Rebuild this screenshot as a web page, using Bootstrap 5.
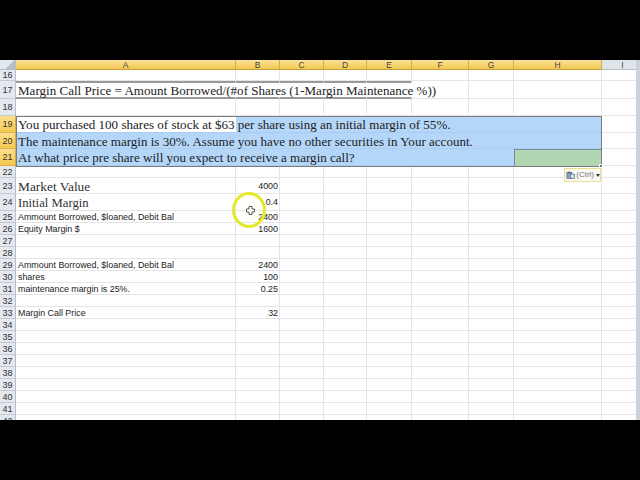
<!DOCTYPE html>
<html><head><meta charset="utf-8">
<link href="https://cdn.jsdelivr.net/npm/bootstrap@5.3.0/dist/css/bootstrap.min.css" rel="stylesheet">
<style>
html,body{margin:0;background:#000;overflow:hidden}
.xl-stage{width:640px;height:480px;padding:60px 0;background:#000}
.xl-sheet{position:relative;width:640px;height:360px;overflow:hidden;background:#fff}
.xl-grid{table-layout:fixed;border-collapse:separate;border-spacing:0;width:640px;font:8.9px/1 "Liberation Sans",sans-serif;color:#222}
.xl-grid td,.xl-grid th{padding:1px 1px 0 2px;border-right:1px solid #e3e5e7;border-bottom:1px solid #e3e5e7;white-space:nowrap;overflow:visible;font-weight:400;vertical-align:middle}
.xl-grid thead th{height:10px;text-align:center;font-size:8.5px;color:#444;background:linear-gradient(#fbe29a,#f3c84f);border-right:1px solid #d8b04a;border-bottom:1px solid #c9a040;line-height:8px;padding:0}
.xl-grid thead th.xl-corner{background:linear-gradient(135deg,#e3e8ee 60%,#b8bec6 60%);border-right-color:#b5bcc5;border-bottom-color:#b5bcc5}
.xl-grid thead th.xl-off{background:#dfe4ea;border-right-color:#c2c8d0;border-bottom-color:#b5bcc5;padding-left:4px}
.xl-grid tbody th{background:#e4e9ef;color:#333;text-align:center;font-size:9px;padding:1px 0 0;border-right:1px solid #b8bec6;border-bottom:1px solid #c5cad1}
.xl-grid tbody th.xl-on{background:linear-gradient(#fbdf8f,#f4c94f);border-right-color:#d8a840;border-bottom-color:#dbb050}
.xl-h11 td,.xl-h11 th{height:11px}
.xl-h12 td,.xl-h12 th{height:12px}
.xl-h18 td,.xl-h18 th{height:18px}
.xl-h17 td,.xl-h17 th{height:17px}
.xl-h16 td,.xl-h16 th{height:16px}
.xl-grid td.xl-serif{font:13.05px/1 "Liberation Serif",serif;color:#222}
.xl-grid td.xl-big{font:13.4px/11px "Liberation Serif",serif;color:#333;padding-top:2px}
.xl-grid td.xl-big2{font:12.7px/11px "Liberation Serif",serif;color:#333;padding-top:2px}
.xl-num{text-align:right}
.xl-grid td.xl-rule{border-top:2px solid #9a9a9a;border-bottom:2px solid #9a9a9a;border-right-color:transparent}
.xl-grid td.xl-sel{background:#b4d6f9;border-right-color:#b4d6f9;border-bottom-color:#abcdf0}
.xl-grid td.xl-active{background:#fff;border-right-color:transparent;border-bottom-color:#abcdf0}
.xl-grid td.xl-green{background:#b3d6b2;border-color:#6f8fa5;border-style:solid;border-width:1px 0 0 1px}
.xl-frame{position:absolute;left:16px;top:56px;width:586px;height:51px;border:1px solid #7b7b7b;pointer-events:none}
.xl-handle{position:absolute;right:-2px;bottom:-2px;width:4px;height:4px;background:#777;border:1px solid #fff}
.xl-ctrl{position:absolute;left:564px;top:108px;width:37px;height:14px;background:#fafaf3;border:1px solid #ecdf8e;font:8px/12px "Liberation Sans",sans-serif;color:#778;display:flex;align-items:center;gap:1px;padding-left:1px}
.xl-caret{width:0;height:0;border:2.5px solid transparent;border-top:3px solid #333;border-bottom:0;margin-left:1px}
.xl-ring{position:absolute;left:232px;top:132px;width:34px;height:36px;border:3px solid #e6e82c;border-radius:50%;background:rgba(255,255,200,.08)}
.xl-cross{position:absolute;left:246px;top:146px}
.xl-edge{position:absolute;left:636px;top:0;width:4px;height:100%;background:#ccd2d9}
</style></head>
<body>
<div class="xl-stage">
<div class="xl-sheet">
<table class="xl-grid">
<colgroup><col style="width:16px"><col style="width:220px"><col style="width:44px"><col style="width:44px"><col style="width:43px"><col style="width:45px"><col style="width:57px"><col style="width:45px"><col style="width:88px"><col style="width:38px"></colgroup>
<thead><tr><th class="xl-corner"></th><th>A</th><th>B</th><th>C</th><th>D</th><th>E</th><th>F</th><th>G</th><th>H</th><th class="xl-off">I</th></tr></thead>
<tbody>
<tr class="xl-h11"><th>16</th><td></td><td></td><td></td><td></td><td></td><td></td><td></td><td></td><td></td></tr>
<tr class="xl-h18"><th>17</th><td class="xl-rule xl-serif">Margin Call Price = Amount Borrowed/(#of Shares (1-Margin Maintenance %))</td><td class="xl-rule"></td><td class="xl-rule"></td><td class="xl-rule"></td><td class="xl-rule"></td><td></td><td></td><td></td><td></td></tr>
<tr class="xl-h17"><th>18</th><td></td><td></td><td></td><td></td><td></td><td></td><td></td><td></td><td></td></tr>
<tr class="xl-h17"><th class="xl-on">19</th><td class="xl-active xl-serif">You purchased 100 shares of stock at $63 per share using an initial margin of 55%.</td><td class="xl-sel"></td><td class="xl-sel"></td><td class="xl-sel"></td><td class="xl-sel"></td><td class="xl-sel"></td><td class="xl-sel"></td><td class="xl-sel"></td><td></td></tr>
<tr class="xl-h16"><th class="xl-on">20</th><td class="xl-sel xl-serif">The maintenance margin is 30%. Assume you have no other securities in Your account.</td><td class="xl-sel"></td><td class="xl-sel"></td><td class="xl-sel"></td><td class="xl-sel"></td><td class="xl-sel"></td><td class="xl-sel"></td><td class="xl-sel"></td><td></td></tr>
<tr class="xl-h17"><th class="xl-on">21</th><td class="xl-sel xl-serif">At what price pre share will you expect to receive a margin call?</td><td class="xl-sel"></td><td class="xl-sel"></td><td class="xl-sel"></td><td class="xl-sel"></td><td class="xl-sel"></td><td class="xl-sel"></td><td class="xl-green"></td><td></td></tr>
<tr class="xl-h12"><th>22</th><td></td><td></td><td></td><td></td><td></td><td></td><td></td><td></td><td></td></tr>
<tr class="xl-h16"><th>23</th><td class="xl-big">Market Value</td><td class="xl-num">4000</td><td></td><td></td><td></td><td></td><td></td><td></td><td></td></tr>
<tr class="xl-h17"><th>24</th><td class="xl-big2">Initial Margin</td><td class="xl-num">0.4</td><td></td><td></td><td></td><td></td><td></td><td></td><td></td></tr>
<tr class="xl-h12"><th>25</th><td>Ammount Borrowed, $loaned, Debit Bal</td><td class="xl-num">2400</td><td></td><td></td><td></td><td></td><td></td><td></td><td></td></tr>
<tr class="xl-h12"><th>26</th><td>Equity Margin $</td><td class="xl-num">1600</td><td></td><td></td><td></td><td></td><td></td><td></td><td></td></tr>
<tr class="xl-h12"><th>27</th><td></td><td></td><td></td><td></td><td></td><td></td><td></td><td></td><td></td></tr>
<tr class="xl-h12"><th>28</th><td></td><td></td><td></td><td></td><td></td><td></td><td></td><td></td><td></td></tr>
<tr class="xl-h12"><th>29</th><td>Ammount Borrowed, $loaned, Debit Bal</td><td class="xl-num">2400</td><td></td><td></td><td></td><td></td><td></td><td></td><td></td></tr>
<tr class="xl-h12"><th>30</th><td>shares</td><td class="xl-num">100</td><td></td><td></td><td></td><td></td><td></td><td></td><td></td></tr>
<tr class="xl-h12"><th>31</th><td>maintenance margin is 25%.</td><td class="xl-num">0.25</td><td></td><td></td><td></td><td></td><td></td><td></td><td></td></tr>
<tr class="xl-h12"><th>32</th><td></td><td></td><td></td><td></td><td></td><td></td><td></td><td></td><td></td></tr>
<tr class="xl-h12"><th>33</th><td>Margin Call Price</td><td class="xl-num">32</td><td></td><td></td><td></td><td></td><td></td><td></td><td></td></tr>
<tr class="xl-h12"><th>34</th><td></td><td></td><td></td><td></td><td></td><td></td><td></td><td></td><td></td></tr>
<tr class="xl-h12"><th>35</th><td></td><td></td><td></td><td></td><td></td><td></td><td></td><td></td><td></td></tr>
<tr class="xl-h12"><th>36</th><td></td><td></td><td></td><td></td><td></td><td></td><td></td><td></td><td></td></tr>
<tr class="xl-h12"><th>37</th><td></td><td></td><td></td><td></td><td></td><td></td><td></td><td></td><td></td></tr>
<tr class="xl-h12"><th>38</th><td></td><td></td><td></td><td></td><td></td><td></td><td></td><td></td><td></td></tr>
<tr class="xl-h12"><th>39</th><td></td><td></td><td></td><td></td><td></td><td></td><td></td><td></td><td></td></tr>
<tr class="xl-h12"><th>40</th><td></td><td></td><td></td><td></td><td></td><td></td><td></td><td></td><td></td></tr>
<tr class="xl-h12"><th>41</th><td></td><td></td><td></td><td></td><td></td><td></td><td></td><td></td><td></td></tr>
<tr class="xl-h12"><th>42</th><td></td><td></td><td></td><td></td><td></td><td></td><td></td><td></td><td></td></tr>
</tbody></table>
<div class="xl-frame"><span class="xl-handle"></span></div>
<div class="xl-ctrl"><svg width="11" height="10" viewBox="0 0 11 10"><rect x="1" y="2" width="6" height="7" fill="#8fa6ba" stroke="#4f6a84" stroke-width=".8"/><rect x="5" y="4" width="5" height="5" fill="#d5dee6" stroke="#4f6a84" stroke-width=".8"/><rect x="2.500" y="1" width="3" height="2" fill="#4f6a84"/></svg><span>(Ctrl)</span><span class="xl-caret"></span></div>
<div class="xl-ring"></div>
<svg class="xl-cross" width="9" height="9" viewBox="0 0 9 9"><path d="M3 .5h3v2.500h2.500v3H6v2.500H3V6H.5V3H3z" fill="#fff" stroke="#555"/></svg>
<div class="xl-edge"></div>
</div></div>
<script src="https://cdn.jsdelivr.net/npm/bootstrap@5.3.0/dist/js/bootstrap.bundle.min.js"></script>
</body></html>
